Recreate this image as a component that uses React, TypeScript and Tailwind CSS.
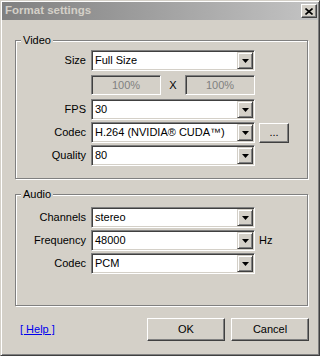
import React from 'react';

const sunken =
  'border border-t-[#808080] border-l-[#808080] border-b-white border-r-white shadow-[inset_1px_1px_0_#404040,inset_-1px_-1px_0_#d4d0c8]';
const raised =
  'border border-t-white border-l-white border-b-[#404040] border-r-[#404040] shadow-[inset_-1px_-1px_0_#808080]';

const Arrow = () => (
  <svg width="7" height="4" viewBox="0 0 7 4">
    <path d="M0 0h7L3.5 4z" fill="#000" />
  </svg>
);

const Combo = ({ value }: { value: string }) => (
  <div className={`flex h-[21px] w-[164px] shrink-0 bg-white p-[1px] ${sunken}`}>
    <span className="flex-1 truncate pl-[2px] text-[11px] leading-[17px] text-black">{value}</span>
    <div className="flex w-[16px] items-center justify-center border border-t-[#d4d0c8] border-l-[#d4d0c8] border-b-[#404040] border-r-[#404040] bg-[#d4d0c8] shadow-[inset_1px_1px_0_#fff,inset_-1px_-1px_0_#808080]">
      <Arrow />
    </div>
  </div>
);

const PercentBox = () => (
  <div className={`flex h-[20px] w-[70px] shrink-0 items-center justify-center bg-[#d4d0c8] text-[11px] text-[#808080] ${sunken}`}>
    100%
  </div>
);

const Row = ({ label, children, className = '' }: { label: string; children: React.ReactNode; className?: string }) => (
  <div className={`flex items-center ${className}`}>
    <div className="w-[70px] shrink-0 text-right text-[11px] text-black">{label}</div>
    <div className="ml-[5px] flex items-center">{children}</div>
  </div>
);

const Group = ({ title, className = '', children }: { title: string; className?: string; children: React.ReactNode }) => (
  <div
    className={`relative ml-[13px] w-[293px] border border-[#808080] shadow-[inset_1px_1px_0_#fff,1px_1px_0_#fff] ${className}`}
  >
    <span className="absolute -top-[7px] left-[5px] bg-[#d4d0c8] px-[2px] text-[11px] leading-[13px] text-black">
      {title}
    </span>
    {children}
  </div>
);

const Button = ({ children, size }: { children: React.ReactNode; size: string }) => (
  <button className={`flex shrink-0 items-center justify-center bg-[#d4d0c8] text-[11px] text-black ${raised} ${size}`}>
    {children}
  </button>
);

export default function App() {
  return (
    <div className="flex h-[356px] w-[320px] flex-col border border-t-[#d4d0c8] border-l-[#d4d0c8] border-b-[#404040] border-r-[#404040] bg-[#d4d0c8] p-[1px] font-['Liberation_Sans',Arial,sans-serif] shadow-[inset_1px_1px_0_#fff,inset_-1px_-1px_0_#808080]">
      {/* title bar */}
      <div className="flex h-[18px] items-center justify-between bg-linear-to-r from-[#808080] to-[#c4c4c4] pl-[3px] pr-[1px]">
        <span className="text-[11.5px] font-bold text-[#d4d0c8]">Format settings</span>
        <button
          className={`flex h-[14px] w-[16px] items-center justify-center bg-[#d4d0c8] ${raised}`}
          aria-label="Close"
        >
          <svg width="8" height="7" viewBox="0 0 8 7">
            <path d="M0.5 0.5l7 6M7.5 0.5l-7 6" stroke="#000" strokeWidth="1.6" />
          </svg>
        </button>
      </div>

      <Group title="Video" className="mt-[20px] h-[139px] pt-[9px]">
        <Row label="Size">
          <Combo value="Full Size" />
        </Row>
        <Row label="" className="mt-[4px]">
          <PercentBox />
          <span className="w-[24px] text-center text-[11px] text-black">X</span>
          <PercentBox />
        </Row>
        <Row label="FPS" className="mt-[4px]">
          <Combo value="30" />
        </Row>
        <Row label="Codec" className="mt-[2px]">
          <Combo value="H.264 (NVIDIA® CUDA™)" />
          <div className="ml-[4px]">
            <Button size="h-[20px] w-[30px]">...</Button>
          </div>
        </Row>
        <Row label="Quality" className="mt-[2px]">
          <Combo value="80" />
        </Row>
      </Group>

      <Group title="Audio" className="mt-[15px] h-[112px] pt-[12px]">
        <Row label="Channels">
          <Combo value="stereo" />
        </Row>
        <Row label="Frequency" className="mt-[2px]">
          <Combo value="48000" />
          <span className="ml-[4px] text-[11px] text-black">Hz</span>
        </Row>
        <Row label="Codec" className="mt-[2px]">
          <Combo value="PCM" />
        </Row>
      </Group>

      <div className="mt-[12px] flex items-center">
        <a href="#" className="ml-[18px] text-[11px] text-[#0000ee] underline">
          [ Help ]
        </a>
        <div className="ml-auto mr-[9px] flex gap-[6px]">
          <Button size="h-[23px] w-[78px]">OK</Button>
          <Button size="h-[23px] w-[78px]">Cancel</Button>
        </div>
      </div>
    </div>
  );
}
